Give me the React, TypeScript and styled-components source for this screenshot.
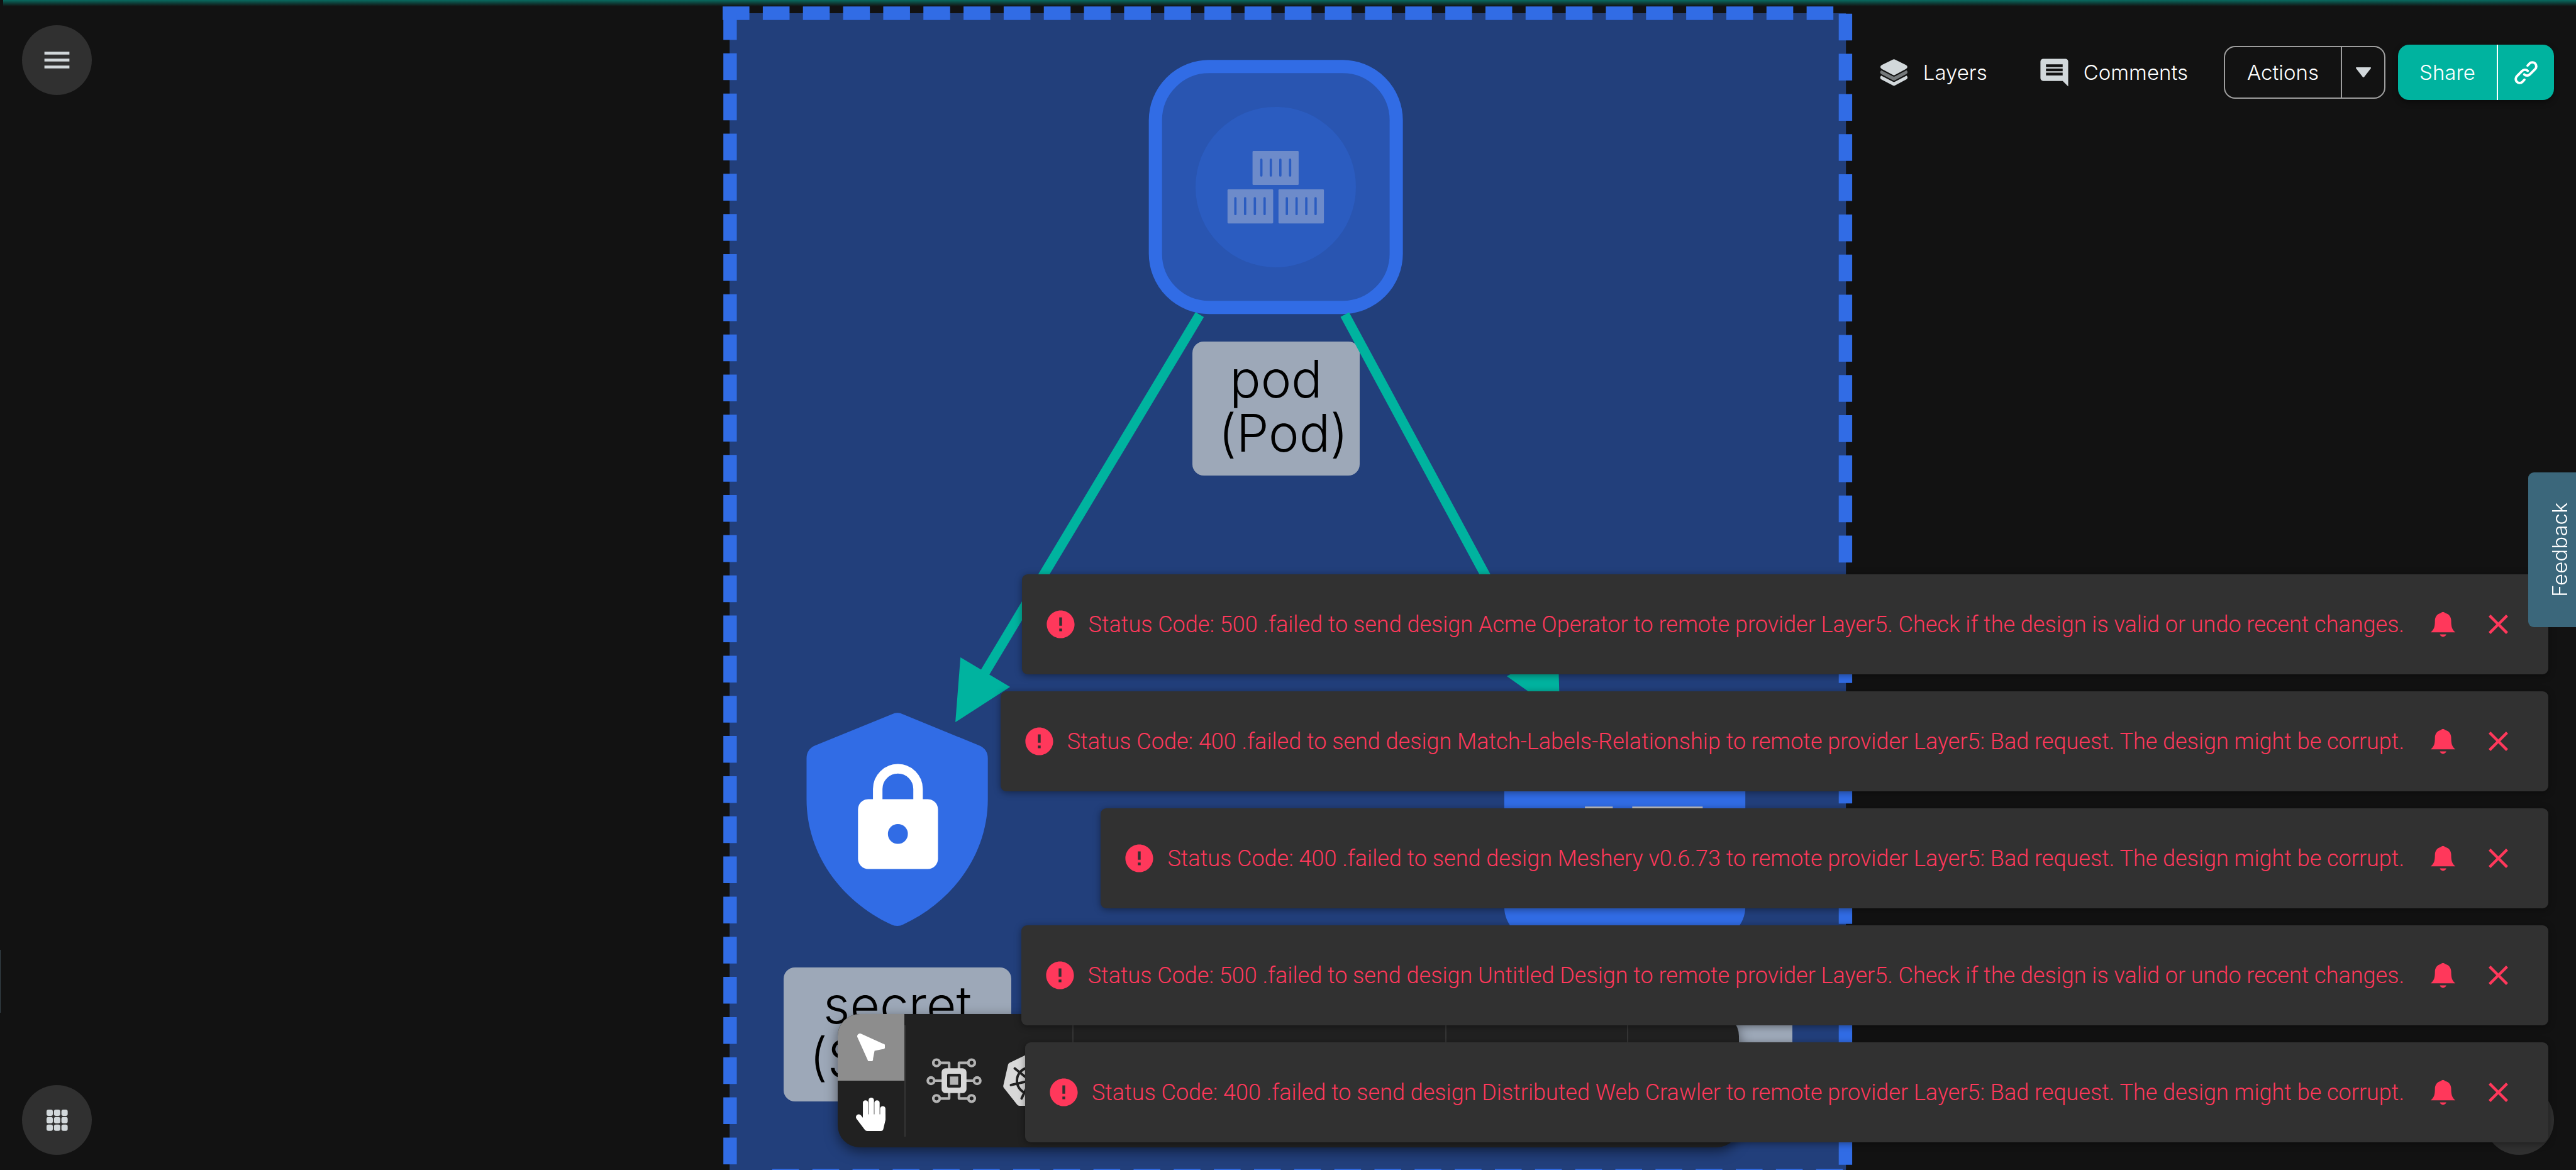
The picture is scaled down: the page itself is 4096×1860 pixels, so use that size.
import React from "react";
import styled, { createGlobalStyle, css } from "styled-components";
import { MdClose, MdComment, MdError, MdMenu } from "react-icons/md";

const color = {
  page: "#121212",
  frame: "#223f7b",
  kube: "#316ce5",
  teal: "#00b39f",
  surface: "#303030",
  toast: "#313131",
  dock: "#212121",
  error: "#ff385b",
  icon: "#d2d8db",
};

const GlobalStyle = createGlobalStyle`
  *, *::before, *::after { box-sizing: border-box; }
  html, body { margin: 0; background: ${color.page}; }
  body, button { font-family: Inter, Roboto, sans-serif; font-weight: 300; }
  button { margin: 0; padding: 0; border: 0; background: none; color: inherit; cursor: pointer; }
  svg { display: block; flex: none; }
`;

const Page = styled.main`
  position: relative;
  min-height: 100vh;
  display: flex;
  flex-direction: column;
  justify-content: space-between;
  overflow: hidden;
  color: #fff;
`;

/* ---------- canvas ---------- */

const Canvas = styled.section`
  position: absolute;
  inset: 0;
  overflow: hidden;
`;

const Graph = styled.div`
  position: relative;
  width: 1776px;
  margin: 21px auto 0;
`;

const GraphLayer = styled.svg`
  position: absolute;
  top: 0;
  left: 0;
  width: 1776px;
  height: 1848px;
  overflow: visible;
`;

const NodeLabel = styled.div<{ $x: number; $y: number; $w: number }>`
  position: absolute;
  left: ${(p) => p.$x}px;
  top: ${(p) => p.$y}px;
  width: ${(p) => p.$w}px;
  height: 213px;
  padding: 17px 0;
  border-radius: 18px;
  background: #9da8b8;
  color: #000;
  font-size: 82px;
  line-height: 86px;
  text-align: center;
  white-space: pre;
`;

const TopGlow = styled.div`
  position: absolute;
  inset: 0 0 auto 5px;
  height: 10px;
  background: linear-gradient(rgba(0, 179, 159, 0.55), rgba(0, 179, 159, 0));
`;

const DrawerEdge = styled.div`
  position: absolute;
  left: 0;
  bottom: 250px;
  width: 1px;
  height: 100px;
  background: #36424a;
`;

const VIEW = "1574 29 2409 2507";

function Slits({ xs, y }: { xs: number[]; y: number }) {
  return (
    <>
      {xs.map((x) => (
        <line key={x} x1={x} x2={x} y1={y + 2} y2={y + 36} stroke="#2b5cc0" strokeWidth="5" strokeLinecap="round" />
      ))}
    </>
  );
}

function NodeShapes() {
  return (
    <GraphLayer viewBox={VIEW} aria-hidden="true">
      <rect x="1574" y="29" width="2408" height="2507" fill={color.frame} />
      <g stroke={color.kube} strokeWidth="29" strokeDasharray="57.7 28.9" fill="none">
        <path d="M1559 29H3974" />
        <path d="M3981 30V2536" />
        <path d="M1575 29V2536" />
        <path d="M1666 2536H3982" />
      </g>

      <rect x="2492.5" y="144" width="519.5" height="519.5" rx="116" fill="#2955b1" stroke={color.kube} strokeWidth="28.5" />
      <circle cx="2752" cy="404" r="173" fill="#2b5cc0" />
      <g fill="#6d8bca">
        <rect x="2702" y="326" width="99.5" height="73.5" rx="2" />
        <rect x="2648" y="409" width="98.5" height="73.5" rx="2" />
        <rect x="2758" y="409" width="98" height="73.5" rx="2" />
      </g>
      <Slits xs={[2721, 2741.5, 2762, 2783]} y={343} />
      <Slits xs={[2665, 2686, 2707, 2728]} y={426} />
      <Slits xs={[2776, 2797, 2818, 2838]} y={426} />

      <path
        fill={color.kube}
        d="M1924 1541Q1936 1535 1948 1541L2112 1608Q2131 1616 2131 1636V1724C2131 1840 2059 1942 1949 1994Q1936 2001 1922 1994C1812 1942 1740 1840 1740 1724V1636Q1740 1616 1759 1608Z"
      />
      <path d="M1893.500 1730V1702A43.500 43.500 0 0 1 1980.500 1702V1730" fill="none" stroke="#fff" strokeWidth="20.500" />
      <rect x="1851" y="1724" width="172.500" height="150.500" rx="22" fill="#fff" />
      <circle cx="1937" cy="1799" r="21.500" fill={color.kube} />

      <rect x="3245" y="1508" width="520" height="520" rx="72" fill={color.kube} />
      <rect x="3419" y="1740" width="60" height="20" fill="#c4c4c4" />
      <rect x="3521" y="1740" width="152" height="20" fill="#c4c4c4" />
    </GraphLayer>
  );
}

function Edges() {
  return (
    <GraphLayer viewBox={VIEW} aria-hidden="true">
      <g stroke={color.teal} strokeWidth="21" fill="none">
        <path d="M2588 679L2120 1459" />
        <path d="M2901 679L3310 1437" />
      </g>
      <g fill={color.teal}>
        <path d="M2061 1558L2072 1418L2179 1482Z" />
        <path d="M3365 1540L3250.500 1459L3361 1400Z" />
      </g>
    </GraphLayer>
  );
}

/* ---------- header ---------- */

const Header = styled.header`
  position: relative;
  display: flex;
  justify-content: space-between;
  align-items: flex-start;
  padding: 40px 35px 0;
`;

const RoundButton = styled.button`
  display: grid;
  place-items: center;
  width: 111px;
  height: 111px;
  border-radius: 50%;
  background: ${color.surface};
  color: ${color.icon};
`;

const HeaderActions = styled.nav`
  display: flex;
  align-items: center;
  margin-top: 31px;
`;

const Label = styled.span`
  display: block;
  font-size: 33px;
  line-height: 48px;
`;

const PlainButton = styled.button<{ $after: number }>`
  display: flex;
  align-items: center;
  gap: 20px;
  margin-right: ${(p) => p.$after}px;
  svg { color: ${color.icon}; }
`;

const SplitButton = styled.div<{ $filled?: boolean }>`
  display: flex;
  overflow: hidden;
  border-radius: 18px;
  ${(p) =>
    p.$filled
      ? css`
          height: 88px;
          background: ${color.teal};
          box-shadow: 0 4px 10px rgba(0, 0, 0, 0.4);
        `
      : css`
          height: 84px;
          margin-right: 20px;
          border: 2px solid #9e9e9e;
        `}
`;

const SplitMain = styled.button<{ $w: number }>`
  width: ${(p) => p.$w}px;
`;

const SplitSide = styled.button<{ $w: number; $line: string }>`
  display: grid;
  place-items: center;
  width: ${(p) => p.$w}px;
  border-left: 2px solid ${(p) => p.$line};
`;

function LayersIcon() {
  return (
    <svg width="53" height="53" viewBox="0 0 24 24" fill="currentColor" aria-hidden="true">
      <path d="M11.400 2.500Q12 2.200 12.600 2.500L20.600 6.500Q22.800 7.900 20.600 9.400L12.600 13.700Q12 14 11.400 13.700L3.300 9.400Q1.100 7.900 3.300 6.500Z" />
      <path fill="#75797b" d="M2.800 10.300L11.400 14.700Q12 14.900 12.600 14.700L21.100 10.300Q22.600 11.900 20.900 13L12.600 17.500Q12 17.800 11.400 17.500L2.900 13Q1.300 11.900 2.800 10.300Z" />
      <path d="M2.800 14.200L11.400 18.600Q12 18.800 12.600 18.600L21.100 14.200Q22.600 15.800 20.900 16.900L12.600 21.300Q12 21.600 11.400 21.300L2.900 16.900Q1.300 15.800 2.800 14.200Z" />
    </svg>
  );
}

function LinkIcon() {
  return (
    <svg width="39" height="39" viewBox="0 0 161 161" fill="none" stroke="#fff" strokeWidth="16" strokeLinecap="round" aria-hidden="true">
      <path d="M91 34L103.600 20.600A26 26 0 0 1 140.400 57.400L106.400 91.400A26 26 0 0 1 69 92" />
      <path d="M70 127L57.400 140.400A26 26 0 0 1 20.600 103.600L54.600 69.600A26 26 0 0 1 92 69" />
    </svg>
  );
}

function CaretIcon() {
  return (
    <svg width="24" height="16" viewBox="0 0 96 64" aria-hidden="true">
      <path d="M3 0H93Q98 2 95 7L53 61Q48 66 43 61L1 7Q-2 2 3 0Z" fill={color.icon} />
    </svg>
  );
}

function AppsIcon() {
  const cells = [0, 16, 32];
  return (
    <svg width="34" height="34" viewBox="0 0 46 46" fill={color.icon} aria-hidden="true">
      {cells.map((y) => cells.map((x) => <rect key={`${x}-${y}`} x={x} y={y} width="13.500" height="13.500" rx="4" />))}
    </svg>
  );
}

/* ---------- dock ---------- */

const Footer = styled.footer`
  position: relative;
  display: grid;
  grid-template-columns: 1fr auto 1fr;
  align-items: end;
  padding: 0 35px 24px;
`;

const Dock = styled.div`
  display: flex;
  align-items: center;
  width: 1433px;
  height: 212px;
  margin-bottom: 12px;
  border-radius: 35px;
  overflow: hidden;
  background: ${color.dock};
`;

const DockShadow = styled.div`
  border-radius: 35px;
  filter: drop-shadow(0 6px 10px rgba(0, 0, 0, 0.5));
`;

const ToolColumn = styled.div`
  display: flex;
  flex-direction: column;
`;

const Tool = styled.button<{ $active?: boolean }>`
  display: grid;
  place-items: center;
  width: 106px;
  height: 106px;
  background: ${(p) => (p.$active ? "#8d8d8d" : "transparent")};
`;

const DockSection = styled.div<{ $w: number }>`
  display: flex;
  align-items: center;
  gap: 33px;
  width: ${(p) => p.$w}px;
  height: 177px;
  padding-left: 33px;
  border-left: 2px solid #353535;
`;

const HelpSlot = styled.div`
  display: flex;
  justify-content: flex-end;
`;

function CursorIcon() {
  return (
    <svg width="44" height="44" viewBox="0 0 180 180" fill="#fff" aria-hidden="true">
      <path d="M26 2L168 66A18 18 0 0 1 163 102L113 113L103 164A18 18 0 0 1 67 170L2 26A18 18 0 0 1 26 2Z" />
    </svg>
  );
}

function HandIcon() {
  return (
    <svg width="47" height="53" viewBox="0 0 192 217" fill="#fff" aria-hidden="true">
      <rect x="45" y="17" width="34" height="120" rx="17" />
      <rect x="82" y="0" width="35" height="137" rx="17" />
      <rect x="120" y="17" width="34" height="120" rx="17" />
      <rect x="157" y="55" width="35" height="100" rx="17" />
      <path d="M45 109H192V145L178 205Q175 217 163 217H72Q64 217 58 210L4 138A18 18 0 0 1 32 115L45 131Z" />
    </svg>
  );
}

function ChipIcon() {
  const pins = [
    [66, 64], [294, 64], [30, 180], [330, 180], [66, 296], [294, 296],
  ];
  return (
    <svg width="88" height="88" viewBox="0 0 360 360" fill="none" aria-hidden="true">
      <g stroke="#b3b3b3" strokeWidth="17" strokeLinejoin="round">
        <path d="M90 64H148V110M270 64H212V110M90 296H148V250M270 296H212V250M54 180H105M306 180H255" />
        {pins.map(([x, y]) => (
          <circle key={`${x}-${y}`} cx={x} cy={y} r="21" />
        ))}
      </g>
      <rect x="99" y="99" width="162" height="162" rx="26" fill="#d8d8d8" />
      <rect x="135" y="135" width="90" height="90" rx="9" fill={color.dock} />
      <rect x="153" y="153" width="54" height="54" fill="#b3b3b3" />
    </svg>
  );
}

function KubernetesIcon() {
  const corners = Array.from({ length: 7 }, (_, i) => {
    const a = (i * 2 * Math.PI) / 7;
    return [Math.sin(a), -Math.cos(a)];
  });
  return (
    <svg width="88" height="88" viewBox="-180 -180 360 360" aria-hidden="true">
      <polygon
        points={corners.map(([x, y]) => `${x * 160},${y * 160}`).join(" ")}
        fill="#d8d8d8"
        stroke="#d8d8d8"
        strokeWidth="38"
        strokeLinejoin="round"
      />
      <g stroke={color.dock} strokeWidth="16" strokeLinecap="round" fill="none">
        <circle r="86" />
        {corners.map(([x, y], i) => (
          <line key={i} x1={x * 30} y1={y * 30} x2={x * 128} y2={y * 128} />
        ))}
      </g>
      <circle r="18" fill={color.dock} />
    </svg>
  );
}

/* ---------- notifications ---------- */

const ToastStack = styled.ul`
  position: absolute;
  right: 44px;
  bottom: 44px;
  display: flex;
  flex-direction: column;
  align-items: flex-end;
  gap: 27px;
  margin: 0;
  padding: 0;
  list-style: none;
`;

const Toast = styled.li`
  display: flex;
  align-items: center;
  gap: 35px;
  height: 159px;
  padding: 0 53px 0 35px;
  border-radius: 9px;
  background: ${color.toast};
  color: ${color.error};
  box-shadow: 0 2px 12px rgba(0, 0, 0, 0.4);
`;

const ToastMessage = styled.div`
  display: flex;
  align-items: center;
  gap: 18px;
  font-family: Roboto, Inter, sans-serif;
  font-size: 36px;
  line-height: 48px;
  white-space: nowrap;
`;

const IconButton = styled.button`
  display: block;
  width: 53px;
  height: 53px;
`;

function BellIcon() {
  return (
    <svg width="53" height="53" viewBox="0 0 24 24" fill="currentColor" aria-hidden="true">
      <path d="M12 3Q13 3 13.400 3.900C16.200 4.500 17.900 6.700 17.900 9.500C17.900 13.500 18.400 15.600 20.900 17.800H3.100C5.700 15.600 6.200 13.500 6.200 9.500C6.200 6.700 7.900 4.500 10.600 3.900Q11 3 12 3Z" />
      <path d="M9.700 19.300H14.400Q13.700 21 12 21Q10.400 21 9.700 19.300Z" />
    </svg>
  );
}

const corrupt = "to remote provider Layer5: Bad request. The design might be corrupt.";
const check = "to remote provider Layer5. Check if the design is valid or undo recent changes.";

const toasts = [
  `Status Code: 500 .failed to send design Acme Operator ${check}`,
  `Status Code: 400 .failed to send design Match-Labels-Relationship ${corrupt}`,
  `Status Code: 400 .failed to send design Meshery v0.6.73 ${corrupt}`,
  `Status Code: 500 .failed to send design Untitled Design ${check}`,
  `Status Code: 400 .failed to send design Distributed Web Crawler ${corrupt}`,
];

const FeedbackTab = styled.button`
  position: absolute;
  right: 0;
  top: 751px;
  width: 76px;
  height: 246px;
  padding-right: 24px;
  border-radius: 0 9px 9px 0;
  background: #3b677b;
  font-size: 33px;
  line-height: 48px;
  writing-mode: vertical-rl;
  transform: rotate(180deg);
`;

export default function App() {
  return (
    <Page>
      <GlobalStyle />
      <Canvas aria-label="Design canvas">
        <Graph>
          <NodeShapes />
          <NodeLabel $x={736} $y={522} $w={266}>{"pod\n (Pod)"}</NodeLabel>
          <NodeLabel $x={86} $y={1517} $w={362}>{"secret\n (Secret)"}</NodeLabel>
          <NodeLabel $x={1158} $y={1517} $w={532} />
          <Edges />
        </Graph>
        <TopGlow />
        <DrawerEdge />
      </Canvas>

      <Header>
        <RoundButton aria-label="Menu">
          <MdMenu size={53} />
        </RoundButton>
        <HeaderActions>
          <PlainButton $after={80}>
            <LayersIcon />
            <Label>Layers</Label>
          </PlainButton>
          <PlainButton $after={57}>
            <MdComment size={53} />
            <Label>Comments</Label>
          </PlainButton>
          <SplitButton>
            <SplitMain $w={184}>
              <Label>Actions</Label>
            </SplitMain>
            <SplitSide $w={69} $line="#9e9e9e" aria-label="More actions">
              <CaretIcon />
            </SplitSide>
          </SplitButton>
          <SplitButton $filled>
            <SplitMain $w={157}>
              <Label>Share</Label>
            </SplitMain>
            <SplitSide $w={91} $line="#fff" aria-label="Copy link">
              <LinkIcon />
            </SplitSide>
          </SplitButton>
        </HeaderActions>
      </Header>

      <Footer>
        <RoundButton aria-label="Apps">
          <AppsIcon />
        </RoundButton>
        <DockShadow>
          <Dock>
            <ToolColumn>
              <Tool $active aria-label="Select">
                <CursorIcon />
              </Tool>
              <Tool aria-label="Pan">
                <HandIcon />
              </Tool>
            </ToolColumn>
            <DockSection $w={267}>
              <ChipIcon />
              <KubernetesIcon />
            </DockSection>
            <DockSection $w={593} />
            <DockSection $w={289} />
            <DockSection $w={178} />
          </Dock>
        </DockShadow>
        <HelpSlot>
          <RoundButton aria-label="Help" />
        </HelpSlot>
      </Footer>

      <ToastStack>
        {toasts.map((text) => (
          <Toast key={text}>
            <ToastMessage>
              <MdError size={53} />
              {text}
            </ToastMessage>
            <IconButton aria-label="Open notifications">
              <BellIcon />
            </IconButton>
            <IconButton aria-label="Dismiss">
              <MdClose size={53} />
            </IconButton>
          </Toast>
        ))}
      </ToastStack>

      <FeedbackTab>Feedback</FeedbackTab>
    </Page>
  );
}
